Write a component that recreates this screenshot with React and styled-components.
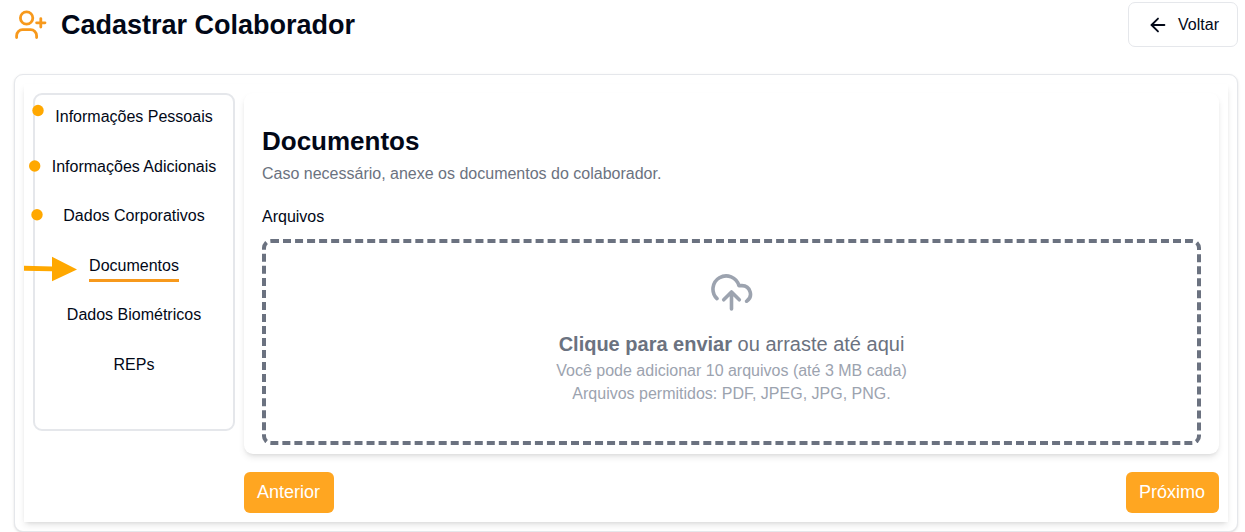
import React from "react";
import styled, { createGlobalStyle, css } from "styled-components";
import { ArrowLeft } from "lucide-react";

const GlobalStyle = createGlobalStyle`
  *, *::before, *::after { box-sizing: border-box; }
  body {
    margin: 0;
    background: #ffffff;
    color: #020817;
    font-family: "Liberation Sans", Arial, sans-serif;
    font-size: 16px;
    line-height: 24px;
  }
  button { font-family: inherit; cursor: pointer; }
`;

const Page = styled.div`
  padding: 2px 7px 0 14px;
`;

const Header = styled.header`
  display: flex;
  align-items: center;
  justify-content: space-between;
  margin-bottom: 27px;
`;

const Heading = styled.div`
  display: flex;
  align-items: center;
  gap: 13px;
`;

const Title = styled.h1`
  margin: 0;
  font-size: 27px;
  line-height: 36px;
  font-weight: 700;
`;

const BackButton = styled.button`
  display: flex;
  align-items: center;
  gap: 9px;
  height: 45px;
  padding: 0 18px;
  border: 1px solid #e5e7eb;
  border-radius: 7px;
  background: #ffffff;
  color: #020817;
  font-size: 16px;
`;

const elevated = css`
  background: #ffffff;
  box-shadow: 0 4px 7px -1px rgba(0, 0, 0, 0.1), 0 2px 4px -2px rgba(0, 0, 0, 0.1);
`;

const Card = styled.main`
  padding: 9px;
  border: 1px solid #e5e7eb;
  border-radius: 9px;
  background: #ffffff;
  box-shadow: 0 1px 3px rgba(0, 0, 0, 0.1), 0 1px 2px -1px rgba(0, 0, 0, 0.1);
`;

const Panel = styled.div`
  ${elevated}
  display: flex;
  align-items: flex-start;
  gap: 9px;
  padding: 9px;
`;

const Sidebar = styled.nav`
  position: relative;
  flex: none;
  width: 202px;
  padding: 10px 0 48px;
  border: 2px solid #e5e7eb;
  border-radius: 9px;
`;

const Steps = styled.ol`
  display: flex;
  flex-direction: column;
  align-items: center;
  justify-content: space-between;
  min-height: 276px;
  margin: 0;
  padding: 0;
  list-style: none;
`;

const StepLink = styled.a`
  display: block;
  padding-bottom: 1px;
  border-bottom: 3px solid ${(p) => (p.$active ? "#f7991c" : "transparent")};
  color: #020817;
  text-decoration: none;
`;

const Markers = styled.svg`
  position: absolute;
  top: 0;
  left: -11px;
  pointer-events: none;
`;

const Content = styled.div`
  flex: 1;
  min-width: 0;
`;

const Section = styled.section`
  ${elevated}
  padding: 30px 18px 9px;
  border-radius: 9px;
`;

const SectionTitle = styled.h2`
  margin: 0;
  font-size: 26px;
  line-height: 36px;
  font-weight: 700;
`;

const Description = styled.p`
  margin: 3px 0 19px;
  color: #6b7280;
`;

const FieldLabel = styled.label`
  display: block;
  margin-bottom: 10px;
`;

const DropZone = styled.button`
  display: flex;
  flex-direction: column;
  align-items: center;
  justify-content: center;
  width: 100%;
  min-height: 206px;
  padding: 18px 18px 24px;
  border: 4px dashed #6b7280;
  border-radius: 9px;
  background: #ffffff;
  color: #9ca3af;
  font-size: 16px;
  line-height: 23px;
`;

const Prompt = styled.span`
  margin: 19px 0 1px;
  color: #6b7280;
  font-size: 20px;
  line-height: 28px;
`;

const Actions = styled.div`
  display: flex;
  justify-content: space-between;
  margin-top: 18px;
`;

const ActionButton = styled.button`
  height: 41px;
  padding: 0 14px 0 13px;
  border: 0;
  border-radius: 6px;
  background: #ffa621;
  color: #ffffff;
  font-size: 18px;
  line-height: 27px;
`;

const steps = [
  "Informações Pessoais",
  "Informações Adicionais",
  "Dados Corporativos",
  "Documentos",
  "Dados Biométricos",
  "REPs",
];

const AddUserIcon = () => (
  <svg width="34" height="32" viewBox="0 0 34 32" fill="none" stroke="#f7991c" strokeWidth="2.8" strokeLinecap="round" aria-hidden="true">
    <circle cx="12.6" cy="9" r="6.2" />
    <path d="M2.6 28.6v-1.9a6 6 0 0 1 6-6h8a6 6 0 0 1 6 6v1.9" />
    <path d="M26.8 9.6v8.4M22.6 13.8h8.4" />
  </svg>
);

const CloudUploadIcon = () => (
  <svg width="42" height="38" viewBox="0 0 42 38" fill="none" stroke="#9ca3af" strokeWidth="3.6" strokeLinecap="round" strokeLinejoin="round" aria-hidden="true">
    <path d="M6 25.6A13.2 13.2 0 1 1 27.9 12.6H31a8.5 8.5 0 0 1 4.6 15.6" />
    <path d="M20.5 36V19M12.7 26.8l7.8-7.8 7.8 7.8" />
  </svg>
);

export default function App() {
  return (
    <>
      <GlobalStyle />
      <Page>
        <Header>
          <Heading>
            <AddUserIcon />
            <Title>Cadastrar Colaborador</Title>
          </Heading>
          <BackButton type="button">
            <ArrowLeft size={22} strokeWidth={2} aria-hidden="true" />
            Voltar
          </BackButton>
        </Header>
        <Card>
          <Panel>
            <Sidebar aria-label="Etapas do cadastro">
              <Steps>
                {steps.map((step) => (
                  <li key={step}>
                    <StepLink
                      href="#"
                      $active={step === "Documentos"}
                      aria-current={step === "Documentos" ? "step" : undefined}
                    >
                      {step}
                    </StepLink>
                  </li>
                ))}
              </Steps>
              <Markers width="60" height="200" viewBox="0 0 60 200" fill="#ffa800" aria-hidden="true">
                <circle cx="14" cy="15.5" r="5.7" />
                <circle cx="10.7" cy="71" r="5.7" />
                <circle cx="13" cy="119.8" r="5.7" />
                <path d="M0 170.8l28 .6v-9.7l25 12.7-25 11.9v-10l-28-.6z" />
              </Markers>
            </Sidebar>
            <Content>
              <Section>
                <SectionTitle>Documentos</SectionTitle>
                <Description>Caso necessário, anexe os documentos do colaborador.</Description>
                <FieldLabel htmlFor="arquivos">Arquivos</FieldLabel>
                <DropZone id="arquivos" type="button">
                  <CloudUploadIcon />
                  <Prompt>
                    <b>Clique para enviar</b> ou arraste até aqui
                  </Prompt>
                  <span>Você pode adicionar 10 arquivos (até 3 MB cada)</span>
                  <span>Arquivos permitidos: PDF, JPEG, JPG, PNG.</span>
                </DropZone>
              </Section>
              <Actions>
                <ActionButton type="button">Anterior</ActionButton>
                <ActionButton type="button">Próximo</ActionButton>
              </Actions>
            </Content>
          </Panel>
        </Card>
      </Page>
    </>
  );
}
